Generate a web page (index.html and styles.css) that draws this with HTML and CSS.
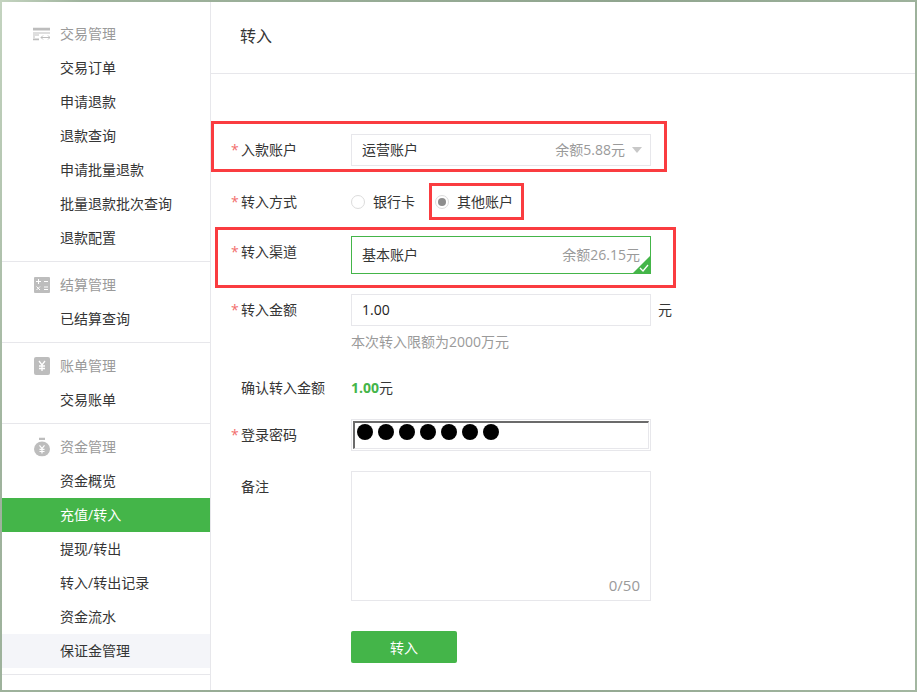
FILE: index.html
```html
<!DOCTYPE html>
<html lang="zh-CN">
<head>
<meta charset="utf-8">
<title>转入</title>
<link rel="stylesheet" href="styles.css">
</head>
<body>
<div class="window">
  <aside class="sidebar">
    <section class="group group-first">
      <h3 class="group-head">
        <svg class="icon icon-trade" viewBox="0 0 17 13"><path d="M0 0h17v3H0zM0 5h17v1H0zM0 7h6v1H0zM0 9h2v1H0zM0 11h6v2H0z" fill="#bdbdbd"/><path d="M8 10h9M10 8l-2 2 2 2M15 8l2 2-2 2" fill="none" stroke="#bdbdbd" stroke-width="1"/></svg>
        交易管理
      </h3>
      <a class="item">交易订单</a>
      <a class="item">申请退款</a>
      <a class="item">退款查询</a>
      <a class="item">申请批量退款</a>
      <a class="item">批量退款批次查询</a>
      <a class="item">退款配置</a>
    </section>
    <section class="group">
      <h3 class="group-head">
        <svg class="icon" viewBox="0 0 16 16"><rect width="16" height="16" rx="1" fill="#bdbdbd"/><path d="M2 4.500h5M4.500 2v5M10 4.500h4M2.500 9.500l3.500 3.500M6 9.500l-3.500 3.500M10 10h4M10 12.500h4" stroke="#fff" stroke-width="1" fill="none"/></svg>
        结算管理
      </h3>
      <a class="item">已结算查询</a>
    </section>
    <section class="group">
      <h3 class="group-head">
        <svg class="icon icon-tall" viewBox="0 0 16 18"><rect width="16" height="18" rx="2" fill="#bdbdbd"/><path d="M5 4l3 4 3-4M8 8v6M5 9h6M5 11.500h6" stroke="#fff" stroke-width="1.300" fill="none"/></svg>
        账单管理
      </h3>
      <a class="item">交易账单</a>
    </section>
    <section class="group">
      <h3 class="group-head">
        <svg class="icon icon-bag" viewBox="0 0 16 19"><path d="M5 0h6v2.500H5z" fill="#bdbdbd"/><ellipse cx="8" cy="11.500" rx="8" ry="7.500" fill="#bdbdbd"/><path d="M5.500 7.800 8 11l2.500-3.200M8 11v5M5.500 11.800h5M5.500 14h5" stroke="#fff" stroke-width="1.200" fill="none"/></svg>
        资金管理
      </h3>
      <a class="item">资金概览</a>
      <a class="item item-active">充值/转入</a>
      <a class="item">提现/转出</a>
      <a class="item">转入/转出记录</a>
      <a class="item">资金流水</a>
      <a class="item item-hover">保证金管理</a>
    </section>
  </aside>
  <main class="content">
    <header class="page-head">转入</header>
    <form class="form">
      <div class="row row-account">
        <label class="label"><i class="req">*</i>入款账户</label>
        <div class="select">
          <span>运营账户</span>
          <span class="balance">余额5.88元</span>
          <i class="caret"></i>
        </div>
      </div>
      <div class="row row-method">
        <label class="label"><i class="req">*</i>转入方式</label>
        <div class="radios">
          <span class="radio"><i class="dot"></i>银行卡</span>
          <span class="radio"><i class="dot dot-on"></i>其他账户</span>
        </div>
      </div>
      <div class="row row-channel">
        <label class="label label-top"><i class="req">*</i>转入渠道</label>
        <div class="select select-on">
          <span>基本账户</span>
          <span class="balance">余额26.15元</span>
          <svg class="tick" viewBox="0 0 19 19"><path d="M19 0v19H0z" fill="#44b549"/><path d="M8 13l3 3 5-6" fill="none" stroke="#fff" stroke-width="1.300"/></svg>
        </div>
      </div>
      <div class="row row-amount">
        <label class="label"><i class="req">*</i>转入金额</label>
        <div class="field">1.00</div>
        <span class="unit">元</span>
      </div>
      <p class="hint">本次转入限额为2000万元</p>
      <div class="row row-confirm">
        <label class="label">确认转入金额</label>
        <span><b class="sum">1.00</b>元</span>
      </div>
      <div class="row row-password">
        <label class="label"><i class="req">*</i>登录密码</label>
        <div class="password-wrap">
          <div class="password"><i></i><i></i><i></i><i></i><i></i><i></i><i></i></div>
        </div>
      </div>
      <div class="row row-note">
        <label class="label label-top">备注</label>
        <div class="note"><span class="count">0/50</span></div>
      </div>
      <div class="actions"><button type="button" class="submit">转入</button></div>
    </form>
    <div class="mark mark-a"></div>
    <div class="mark mark-b"></div>
    <div class="mark mark-c"></div>
  </main>
</div>
</body>
</html>
```
FILE: styles.css
```css
* { box-sizing: border-box; }
html, body { margin: 0; height: 100%; }
body {
  width: 917px;
  height: 692px;
  padding: 2px;
  overflow: hidden;
  background: linear-gradient(100deg, #c4d4c0 0, #9fb39d 8%, #90a58f 60%, #a3b7a1 100%);
  font: 14px/20px "Open Sans", "Noto Sans CJK SC", sans-serif;
  color: #353535;
}
.window { display: flex; height: 688px; background: #fff; overflow: hidden; }
.sidebar { flex: none; width: 209px; border-right: 1px solid #e7e7eb; padding-top: 15px; }
.group { padding: 6px 0; border-bottom: 1px solid #e7e7eb; }
.group-first { padding-top: 0; }
.group-head {
  display: flex;
  align-items: center;
  height: 34px;
  margin: 0;
  position: relative;
  padding-left: 58px;
  font-size: 14px;
  font-weight: 400;
  color: #9a9a9a;
}
.icon { position: absolute; left: 32px; top: 50%; width: 16px; height: 16px; transform: translateY(-50%); }
.icon-trade { left: 31px; width: 17px; height: 13px; }
.icon-tall { height: 18px; }
.icon-bag { height: 19px; }
.item { display: block; height: 34px; line-height: 34px; padding-left: 58px; color: #353535; }
.item-active { background: #44b549; color: #fff; }
.item-hover { background: #f4f5f9; }

.content { flex: 1; position: relative; }
.page-head { height: 72px; padding-left: 29px; line-height: 68px; font-size: 16px; border-bottom: 1px solid #e7e7eb; }
.form { padding: 60px 0 0 0; }
.row { display: flex; align-items: center; }
.label { flex: none; width: 140px; padding-left: 30px; position: relative; }
.label-top { align-self: flex-start; padding-top: 6px; }
.req { position: absolute; left: 20px; color: #f26d6d; font-style: normal; }
.select {
  position: relative;
  display: flex;
  align-items: center;
  width: 300px;
  height: 32px;
  padding: 0 10px;
  border: 1px solid #e7e7eb;
}
.balance { margin-left: auto; color: #9a9a9a; }
.caret { margin: 0 -2px 0 7px; border: 5px solid transparent; border-top: 6px solid #c8c8c8; border-bottom: 0; }
.select-on { height: 38px; border-color: #44b549; }
.tick { position: absolute; right: -1px; bottom: -1px; width: 19px; height: 19px; }
.row-method { margin-top: 17px; height: 38px; }
.radios { display: flex; gap: 20px; }
.radio { display: flex; align-items: center; gap: 8px; }
.dot { width: 14px; height: 14px; border: 1px solid #dcdcdc; border-radius: 50%; display: flex; align-items: center; justify-content: center; }
.dot-on::after { content: ""; width: 8px; height: 8px; border-radius: 50%; background: #8d8d8d; }
.row-channel { margin-top: 15px; align-items: flex-start; }
.row-amount { margin-top: 20px; }
.field { width: 300px; height: 32px; line-height: 30px; padding: 0 10px; border: 1px solid #e7e7eb; color: #222; }
.unit { margin-left: 7px; }
.hint { margin: 6px 0 0 140px; color: #9a9a9a; }
.row-confirm { margin-top: 26px; height: 20px; }
.sum { color: #44b549; font-weight: 700; }
.row-password { margin-top: 21px; }
.password-wrap { width: 300px; height: 32px; border: 1px solid #e7e7eb; padding: 1px; }
.password {
  display: flex;
  gap: 5px;
  height: 28px;
  padding: 1px 0 0 2px;
  border-width: 2px 1px 1px 2px;
  border-color: #6b6b6b #e7e7eb #e7e7eb #6b6b6b;
  border-style: solid;
}
.password i { flex: none; width: 16px; height: 16px; border-radius: 50%; background: #000; }
.row-note { margin-top: 20px; align-items: flex-start; }
.note { position: relative; width: 300px; height: 130px; border: 1px solid #e7e7eb; }
.count { position: absolute; right: 10px; bottom: 5px; font-size: 15px; color: #9a9a9a; }
.actions { margin: 30px 0 0 140px; }
.submit {
  display: block;
  width: 106px;
  height: 32px;
  padding: 1px 0 0;
  border: 0;
  border-radius: 2px;
  background: #44b549;
  color: #fff;
  font: inherit;
}
.mark { position: absolute; border: 3px solid #fa3c40; }
.mark-a { left: 0; top: 119px; width: 456px; height: 51px; }
.mark-b { left: 218px; top: 181px; width: 95px; height: 37px; }
.mark-c { left: 4px; top: 225px; width: 461px; height: 61px; }
```
